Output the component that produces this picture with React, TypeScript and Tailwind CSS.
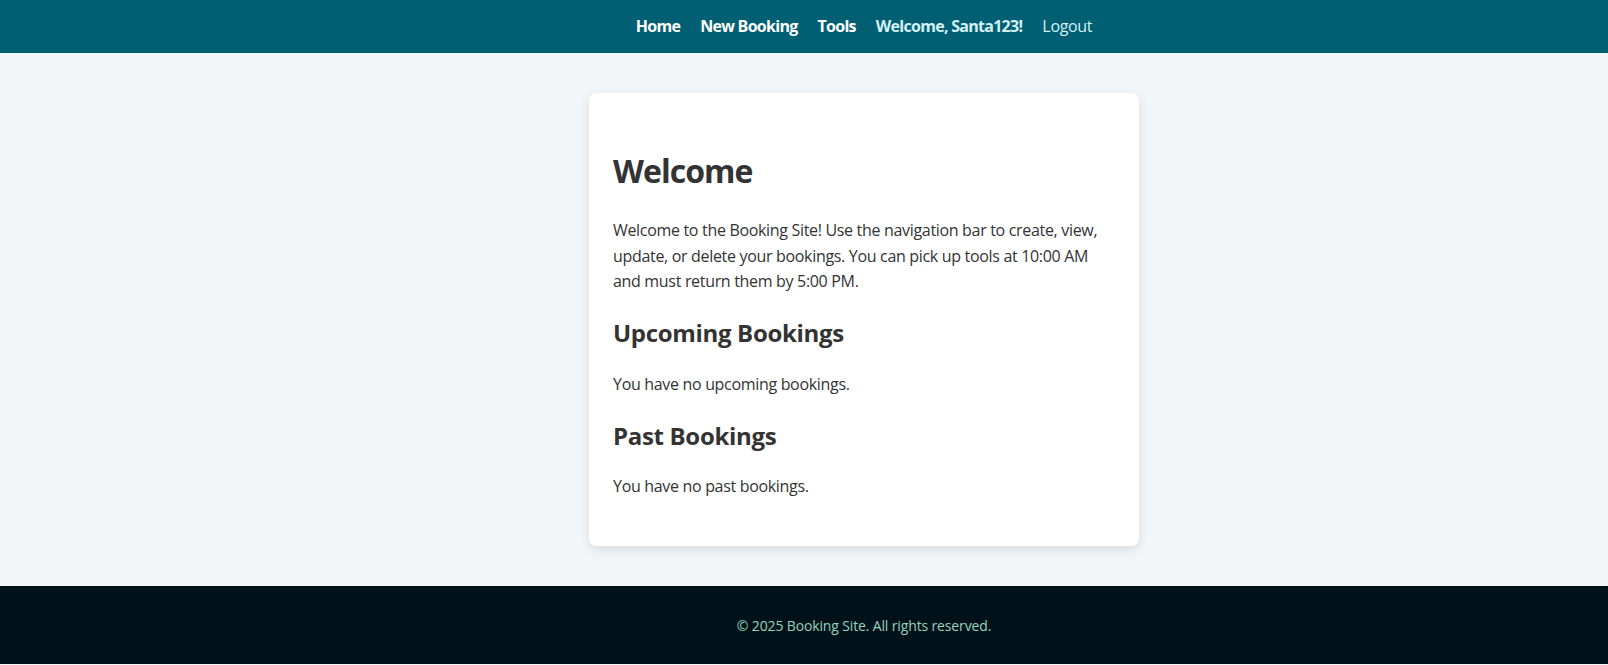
export default function App() {
  return (
    <div className="min-h-screen flex flex-col bg-[#f2f6f9] font-['Open_Sans',sans-serif] text-[#333]">
      <header className="bg-[#005f73] h-[53px] flex items-center">
        <nav className="flex-1 flex justify-center items-center gap-5 pl-[120px] pb-px text-base">
          <a className="font-bold text-white tracking-[-0.045em]">Home</a>
          <a className="font-bold text-white tracking-[-0.045em]">New Booking</a>
          <a className="font-bold text-white tracking-[-0.045em]">Tools</a>
          <span className="font-bold text-[#d4f1f6] tracking-[-0.045em]">Welcome, Santa123!</span>
          <a className="text-[#d4f1f6] tracking-[-0.02em]">Logout</a>
        </nav>
      </header>

      <main className="flex justify-center py-10 pl-[120px]">
        <div className="w-[550px] bg-white rounded-lg shadow-[0_4px_12px_rgba(0,0,0,0.1)] px-6 pt-6 pb-6 tracking-[-0.02em]">
          <h1 className="mt-[34px] text-[32px] leading-[40px] font-bold tracking-[-0.03em]">Welcome</h1>
          <p className="mt-[27px] text-base leading-[1.6]">
            Welcome to the Booking Site! Use the navigation bar to create, view, update, or delete your bookings. You can pick up tools at 10:00 AM and must return them by 5:00 PM.
          </p>
          <h2 className="mt-[22px] text-2xl leading-8 font-bold">Upcoming Bookings</h2>
          <p className="mt-[23px] text-base leading-[1.6]">You have no upcoming bookings.</p>
          <h2 className="mt-[23px] text-2xl leading-8 font-bold">Past Bookings</h2>
          <p className="mt-[22px] mb-[22px] text-base leading-[1.6]">You have no past bookings.</p>
        </div>
      </main>

      <footer className="bg-[#001219] h-[78px] flex items-center justify-center pl-[120px] pt-[3px]">
        <p className="text-sm text-[#94d2bd] tracking-[-0.01em]">© 2025 Booking Site. All rights reserved.</p>
      </footer>
    </div>
  )
}
